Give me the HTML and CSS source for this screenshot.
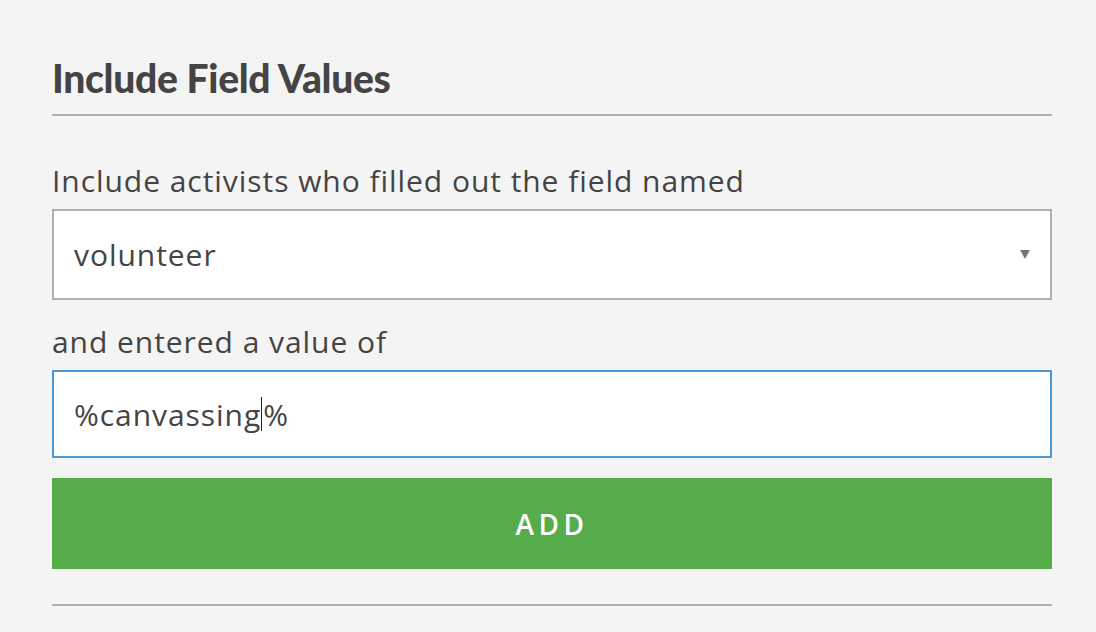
FILE: index.html
```html
<!DOCTYPE html>
<html>
<head>
<meta charset="utf-8">
<link rel="stylesheet" href="styles.css">
</head>
<body>
<div class="panel">
  <h2 class="title">Include Field Values</h2>
  <label class="label">Include activists who filled out the field named</label>
  <div class="select">
    <span class="select-value">volunteer</span>
    <span class="arrow"></span>
  </div>
  <label class="label">and entered a value of</label>
  <div class="input"><span>%canvassing</span><span class="caret"></span><span>%</span></div>
  <div class="button">ADD</div>
  <div class="rule-bottom"></div>
</div>
</body>
</html>
```
FILE: styles.css
```css
html, body {
  margin: 0;
  padding: 0;
  background: #f4f4f4;
}
.panel {
  width: 1000px;
  margin-left: 52px;
  padding-top: 54px;
  display: flex;
  flex-direction: column;
}
.title {
  margin: 0;
  font-family: Lato, "Open Sans", sans-serif;
  font-weight: 900;
  font-size: 39px;
  line-height: 48px;
  color: #444;
  padding-bottom: 12px;
  border-bottom: 2px solid #b0b0b0;
  letter-spacing: -0.3px;
}
.label {
  margin-top: 47px;
  font-family: "Open Sans", sans-serif;
  font-size: 30px;
  line-height: 36px;
  letter-spacing: 0.95px;
  color: #444;
  margin-bottom: 10px;
}
.select {
  box-sizing: border-box;
  height: 91px;
  background: #fff;
  border: 2px solid #b0b0b0;
  display: flex;
  align-items: center;
  padding: 0 20px;
  font-family: "Open Sans", sans-serif;
  font-size: 30px;
  letter-spacing: 0.95px;
  color: #444;
  justify-content: space-between;
  margin-bottom: 24px;
}
.select + .label { margin-top: 0; }
.arrow {
  width: 0;
  height: 0;
  border-left: 5px solid transparent;
  border-right: 5px solid transparent;
  border-top: 9px solid #777;
}
.input {
  box-sizing: border-box;
  height: 88px;
  background: #fff;
  border: 2px solid #4a9ad8;
  display: flex;
  align-items: center;
  padding: 0 20px;
  font-family: "Open Sans", sans-serif;
  font-size: 30px;
  letter-spacing: 0.95px;
  color: #444;
}
.caret {
  display: inline-block;
  width: 1px;
  height: 34px;
  margin-right: 1px;
  background: #222;
}
.button {
  margin-top: 20px;
  height: 91px;
  background: #56ac4a;
  color: #fff;
  display: flex;
  align-items: center;
  justify-content: center;
  font-family: "Open Sans", sans-serif;
  font-weight: 600;
  font-size: 28px;
  letter-spacing: 4.5px;
}
.rule-bottom {
  margin-top: 35px;
  border-top: 2px solid #b0b0b0;
}
```
